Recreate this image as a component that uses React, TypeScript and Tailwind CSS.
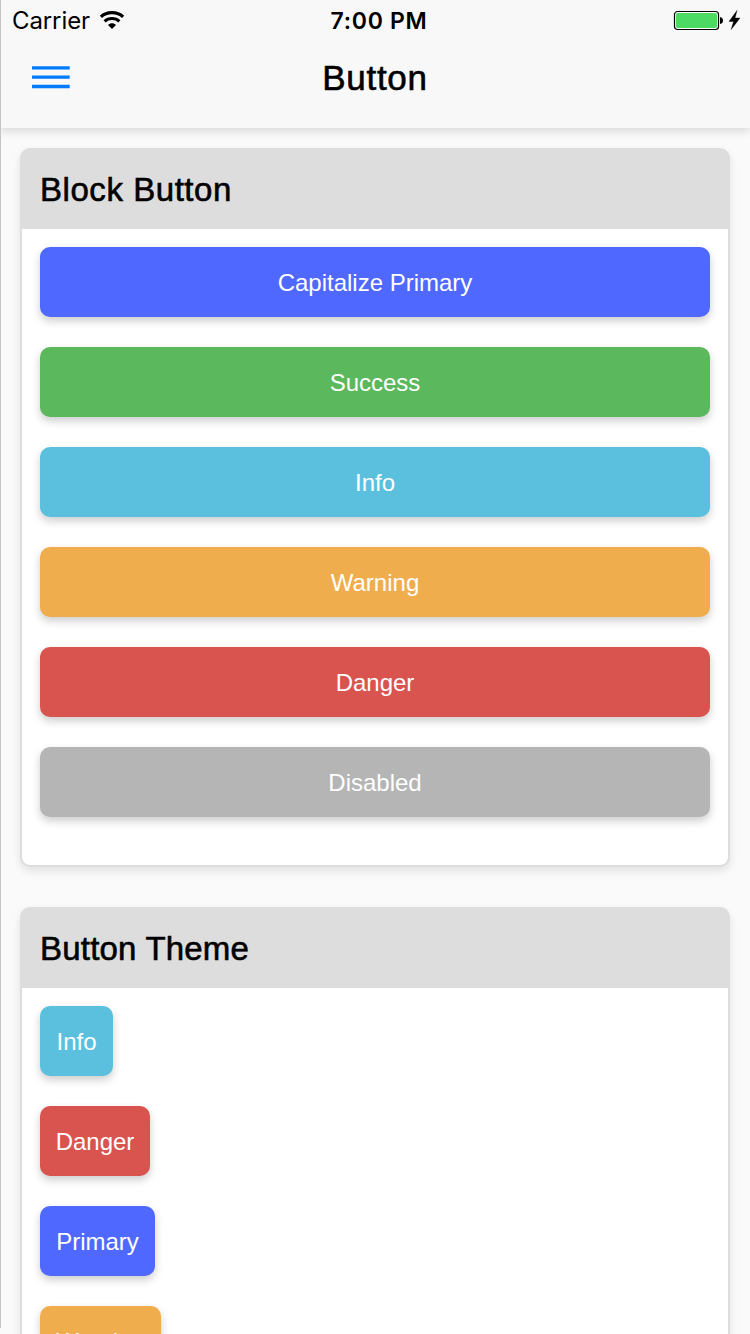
import React from "react";

const shadow = "shadow-[0_4px_8px_rgba(0,0,0,0.2)]";

function Button({ label, className }: { label: string; className: string }) {
  return (
    <button
      className={`flex h-[70px] shrink-0 items-center justify-center rounded-[10px] pt-[2px] text-[24px] leading-[28px] whitespace-nowrap text-white ${shadow} ${className}`}
    >
      {label}
    </button>
  );
}

type CardProps = { title: string; titleClass: string; className: string; children: React.ReactNode };

function Card({ title, titleClass, className, children }: CardProps) {
  return (
    <section className={`shrink-0 rounded-[10px] border-2 border-[#ddd] bg-white shadow-[0_4px_8px_rgba(0,0,0,0.1)] ${className}`}>
      <h2 className={`h-[79px] rounded-t-[6px] bg-[#ddd] pt-[21px] pl-[18px] text-[33px] leading-[38px] font-normal text-black [-webkit-text-stroke:0.6px_black] ${titleClass}`}>
        {title}
      </h2>
      <div className="flex flex-col items-start gap-[30px] px-[18px] pt-[18px]">{children}</div>
    </section>
  );
}

function StatusBar() {
  return (
    <div className="grid h-[41px] grid-cols-3 items-center pr-[9px] pl-3 font-['Inter',sans-serif] text-black">
      <div className="flex items-center gap-[9px]">
        <span className="w-[78px] text-[24px] leading-[30px] tracking-[-0.1px] whitespace-nowrap">Carrier</span>
        <svg className="mb-px" width="26" height="18" viewBox="0 0 26 18" fill="none" stroke="black">
          <path d="M1.9 5.8C7.8.2 18.2.2 24.1 5.8" strokeWidth="3.2" />
          <path d="M5.6 10.3c4-3.7 10.8-3.7 14.8 0" strokeWidth="3.1" />
          <path d="M9 13.9c2.4-2.2 5.6-2.2 8 0L13 18z" fill="black" stroke="none" />
        </svg>
      </div>
      <span className="pl-[5px] text-center text-[23px] leading-[30px] font-semibold tracking-[0.7px] whitespace-nowrap">7:00 PM</span>
      <div className="flex items-center justify-end pb-[2px]">
        <svg width="68" height="22" viewBox="0 0 68 22">
          <rect x="1.5" y="2.5" width="44" height="18" rx="3" fill="white" stroke="black" strokeWidth="1.2" />
          <rect x="3" y="4" width="41" height="15" rx="1.7" fill="#4cd964" />
          <path d="M47 8q3 .5 3 3.5T47 15z" fill="black" />
          <path d="M64 1.5 56 12.4h4.6L58.2 20.5 67 9h-5z" fill="black" stroke="black" strokeWidth=".4" />
        </svg>
      </div>
    </div>
  );
}

export default function App() {
  return (
    <div className="relative flex h-[1334px] w-[750px] flex-col overflow-hidden bg-[#fafafa] font-['Liberation_Sans',sans-serif]">
      <header className="h-32 shrink-0 bg-[#f8f8f8] shadow-[0_4px_8px_rgba(0,0,0,0.12)]">
        <StatusBar />
        <div className="grid h-[72px] grid-cols-[1fr_auto_1fr] items-center">
          <button aria-label="Menu" className="pl-8">
            <svg width="38" height="24" viewBox="0 0 38 24" stroke="#007aff" strokeWidth="3.3">
              <path d="M0 2.8h37.7M0 12.2h37.7M0 21.5h37.7" />
            </svg>
          </button>
          <h1 className="pt-px text-[35px] leading-[40px] font-normal tracking-[0.7px] text-black [-webkit-text-stroke:0.6px_black]">Button</h1>
          <span />
        </div>
      </header>
      <main className="flex flex-col gap-10 px-5 pt-5">
        <Card title="Block Button" titleClass="tracking-[0.55px]" className="h-[719px]">
          <Button label="Capitalize Primary" className="w-full bg-[#4f68ff]" />
          <Button label="Success" className="w-full bg-[#5cb85c]" />
          <Button label="Info" className="w-full bg-[#5bc0de]" />
          <Button label="Warning" className="w-full bg-[#f0ad4e]" />
          <Button label="Danger" className="w-full bg-[#d9534f]" />
          <Button label="Disabled" className="w-full bg-[#b5b5b5]" />
        </Card>
        <Card title="Button Theme" titleClass="tracking-[0.2px]" className="h-[500px]">
          <Button label="Info" className="w-[73px] bg-[#5bc0de]" />
          <Button label="Danger" className="w-[110px] bg-[#d9534f]" />
          <Button label="Primary" className="w-[115px] bg-[#4f68ff]" />
          <Button label="Warning" className="w-[121px] bg-[#f0ad4e]" />
        </Card>
      </main>
      <div className="absolute top-0 left-0 h-[1328px] w-px bg-[#c4c4c4]" />
    </div>
  );
}
